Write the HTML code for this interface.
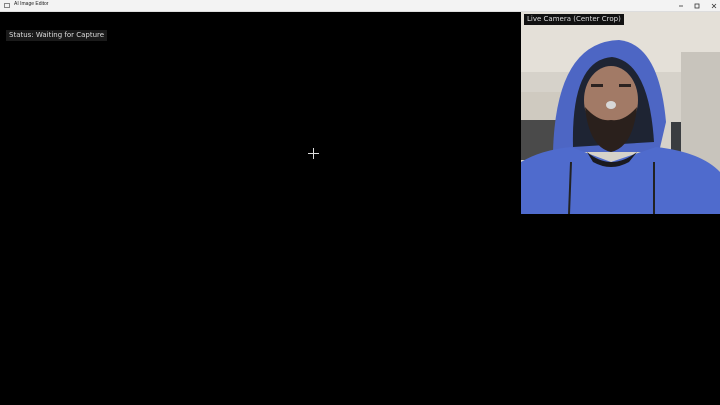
<!DOCTYPE html>
<html><head><style>
body{margin:0;width:720px;height:405px;background:#000;overflow:hidden;position:relative;font-family:"Liberation Sans",sans-serif}
#tb{position:absolute;left:0;top:0;width:720px;height:11px;background:#f3f3f3;border-bottom:1px solid #ddd}
#tb span{position:absolute;left:14px;top:1px;font-size:5px;color:#222}
#st{position:absolute;left:6px;top:30px;height:11px;padding:0 3px;background:#1a1a1a;color:#ddd;font-family:"DejaVu Sans",sans-serif;font-size:7px;line-height:11px}
#cam{position:absolute;left:521px;top:12px;width:199px;height:202px}
#lc{position:absolute;left:524px;top:14px;background:#111;color:#ddd;font-family:"DejaVu Sans",sans-serif;font-size:7px;line-height:11px;padding:0 3px}
</style></head><body>
<div id="tb"><svg style="position:absolute;left:4px;top:3px" width="6" height="5"><rect x=".5" y=".5" width="5" height="4" fill="none" stroke="#555" stroke-width=".7"/></svg><span>AI Image Editor</span>
<svg style="position:absolute;left:676px;top:2px" width="44" height="8"><line x1="3" y1="4" x2="7" y2="4" stroke="#333" stroke-width=".8"/><rect x="19" y="2" width="4" height="4" fill="none" stroke="#333" stroke-width=".8"/><path d="M36 2L40 6M40 2L36 6" stroke="#333" stroke-width=".8"/></svg></div>
<div id="st">Status: Waiting for Capture</div>
<svg style="position:absolute;left:308px;top:148px" width="11" height="11"><path d="M5.5 0V11M0 5.5H11" stroke="#ddd" stroke-width="1"/></svg>
<svg id="cam" viewBox="0 0 199 202">
<rect width="199" height="202" fill="#d6d2ca"/>
<rect x="0" y="0" width="199" height="60" fill="#e4e0d8"/>
<rect x="0" y="80" width="40" height="30" fill="#cfcac0"/>
<rect x="0" y="108" width="40" height="40" fill="#4a4a4a"/>
<rect x="150" y="110" width="30" height="30" fill="#3a3d40"/>
<rect x="160" y="40" width="39" height="120" fill="#c8c4bc"/>
<g transform="translate(-12,0)">
<path d="M44 140 Q47 30 110 28 Q150 32 157 110 L150 140 Z" fill="#4d66c4"/>
<path d="M64 135 Q62 48 103 45 Q140 50 145 130 Z" fill="#1e2433"/>
<ellipse cx="102" cy="88" rx="27" ry="34" fill="#a27a66"/>
<path d="M76 95 Q80 135 102 140 Q124 135 128 95 Q115 110 102 108 Q89 110 76 95Z" fill="#2a201c"/>
<rect x="82" y="72" width="12" height="3" fill="#2b2220"/><rect x="110" y="72" width="12" height="3" fill="#2b2220"/>
<ellipse cx="102" cy="93" rx="5" ry="4" fill="#d8d8d8"/>
</g>
<path d="M0 150 Q20 138 50 135 L90 150 L135 135 Q180 140 199 160 V202 H0Z" fill="#4f6bcd"/>
<path d="M66 140 Q90 160 116 140 L108 150 Q90 160 72 150Z" fill="#1a1a20"/>
<line x1="50" y1="150" x2="48" y2="202" stroke="#222" stroke-width="2"/>
<line x1="133" y1="150" x2="133" y2="202" stroke="#222" stroke-width="2"/>
</svg>
<div id="lc">Live Camera (Center Crop)</div>
</body></html>
